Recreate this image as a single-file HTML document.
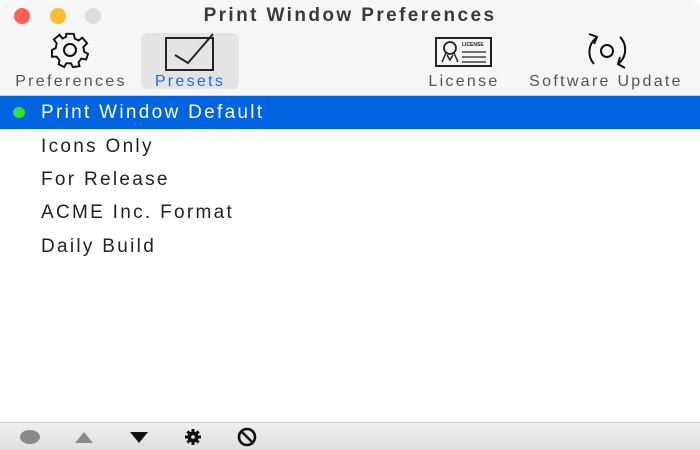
<!DOCTYPE html>
<html><head><style>
*{margin:0;padding:0;box-sizing:border-box}
body{width:700px;height:450px;overflow:hidden;background:#fff;font-family:"Liberation Sans",sans-serif;position:relative}
.top{position:absolute;left:0;top:0;width:700px;height:96px;background:#f6f6f6;border-bottom:1px solid #d0d0d0;border-radius:10px 10px 0 0}
.dot{position:absolute;top:8px;width:16px;height:16px;border-radius:50%}
.title{position:absolute;top:5px;left:0;width:700px;text-align:center;font-weight:bold;font-size:19px;color:#3a3a3a;letter-spacing:2.4px}
.lbl{position:absolute;top:73px;font-size:16px;color:#555;letter-spacing:2.3px;transform:translateX(-50%);white-space:nowrap}
.sel{position:absolute;left:141px;top:33px;width:98px;height:56px;background:#e4e4e4;border-radius:6px}
.row{position:absolute;left:41px;font-size:19px;color:#222;letter-spacing:2.3px;white-space:nowrap}
.bar{position:absolute;left:0;top:96px;width:700px;height:33px;background:#0064e1}
.bot{position:absolute;left:0;top:422px;width:700px;height:28px;background:linear-gradient(#eeeeee,#e0e0e0);border-top:1px solid #cfcfcf}
</style></head><body>
<div class="top"></div>
<div class="dot" style="left:14px;background:#fe5f57"></div>
<div class="dot" style="left:50px;background:#febc2e"></div>
<div class="dot" style="left:85px;background:#dcdcdc"></div>
<div class="title">Print Window Preferences</div>
<div class="sel"></div>
<svg style="position:absolute;left:0;top:0" width="700" height="96">
<g transform="translate(70,50)" fill="none" stroke="#111" stroke-width="2">
<path d="M-4,-17 L4,-17 L5,-12 L9,-10 L13,-13 L18,-7 L14,-3 L15,2 L19,4 L17,10 L12,9 L9,13 L10,17 L3,18 L1,14 L-4,14 L-6,18 L-12,15 L-11,11 L-14,7 L-19,7 L-19,0 L-15,-2 L-14,-7 L-17,-11 L-11,-16 L-8,-12 L-4,-14 Z" transform="scale(.95)"/>
<circle r="6"/>
</g>
<rect x="166" y="38" width="47" height="32" fill="none" stroke="#222" stroke-width="2"/>
<path d="M175,55 L188,63 L213,34" fill="none" stroke="#222" stroke-width="2"/>
<rect x="436" y="38" width="55" height="28" fill="none" stroke="#222" stroke-width="2"/>
<circle cx="450" cy="48" r="6" fill="none" stroke="#222" stroke-width="1.8"/>
<path d="M446,53 L442,62 M454,53 L458,62 M447,55 L450,60 L453,55" fill="none" stroke="#222" stroke-width="1.5"/>
<text x="462" y="46" font-size="5" font-family="Liberation Sans" font-weight="bold" fill="#222">LICENSE</text>
<path d="M462,52 H486 M462,57 H486 M462,62 H486" stroke="#222" stroke-width="1.3"/>
<circle cx="607" cy="51" r="6" fill="none" stroke="#111" stroke-width="2"/>
<path d="M594,64 A18,18 0 0 1 596,38 M620,37 A18,18 0 0 1 618,64" fill="none" stroke="#111" stroke-width="2"/>
<path d="M589,34 L597,37 L594,44 M625,68 L618,64 L620,57" fill="none" stroke="#111" stroke-width="2"/>
</svg>
<div class="lbl" style="left:71px">Preferences</div>
<div class="lbl" style="left:190px;color:#1a6fe6">Presets</div>
<div class="lbl" style="left:464px">License</div>
<div class="lbl" style="left:606px">Software Update</div>
<div class="bar"></div>
<div style="position:absolute;left:13px;top:107px;width:12px;height:11px;border-radius:50%;background:#2ee536"></div>
<div class="row" style="top:102px;color:#fff">Print Window Default</div>
<div class="row" style="top:136px">Icons Only</div>
<div class="row" style="top:169px">For Release</div>
<div class="row" style="top:202px">ACME Inc. Format</div>
<div class="row" style="top:236px">Daily Build</div>
<div class="bot"></div>
<svg style="position:absolute;left:0;top:422px" width="300" height="28">
<ellipse cx="30" cy="15" rx="10" ry="7" fill="#8a8a8a"/>
<path d="M75,21 L84,10 L93,21 Z" fill="#8a8a8a"/>
<path d="M130,10 L148,10 L139,21 Z" fill="#111"/>
<g transform="translate(193,15)" fill="#111"><circle r="5.5"/><g stroke="#111" stroke-width="3"><path d="M0,-8V8M-8,0H8M-5.6,-5.6L5.6,5.6M-5.6,5.6L5.6,-5.6"/></g><circle r="1.8" fill="#e8e8e8"/></g>
<circle cx="247" cy="15" r="8" fill="none" stroke="#111" stroke-width="2.6"/>
<path d="M241.5,9.5 L252.5,20.5" stroke="#111" stroke-width="2.6"/>
</svg>
</body></html>
